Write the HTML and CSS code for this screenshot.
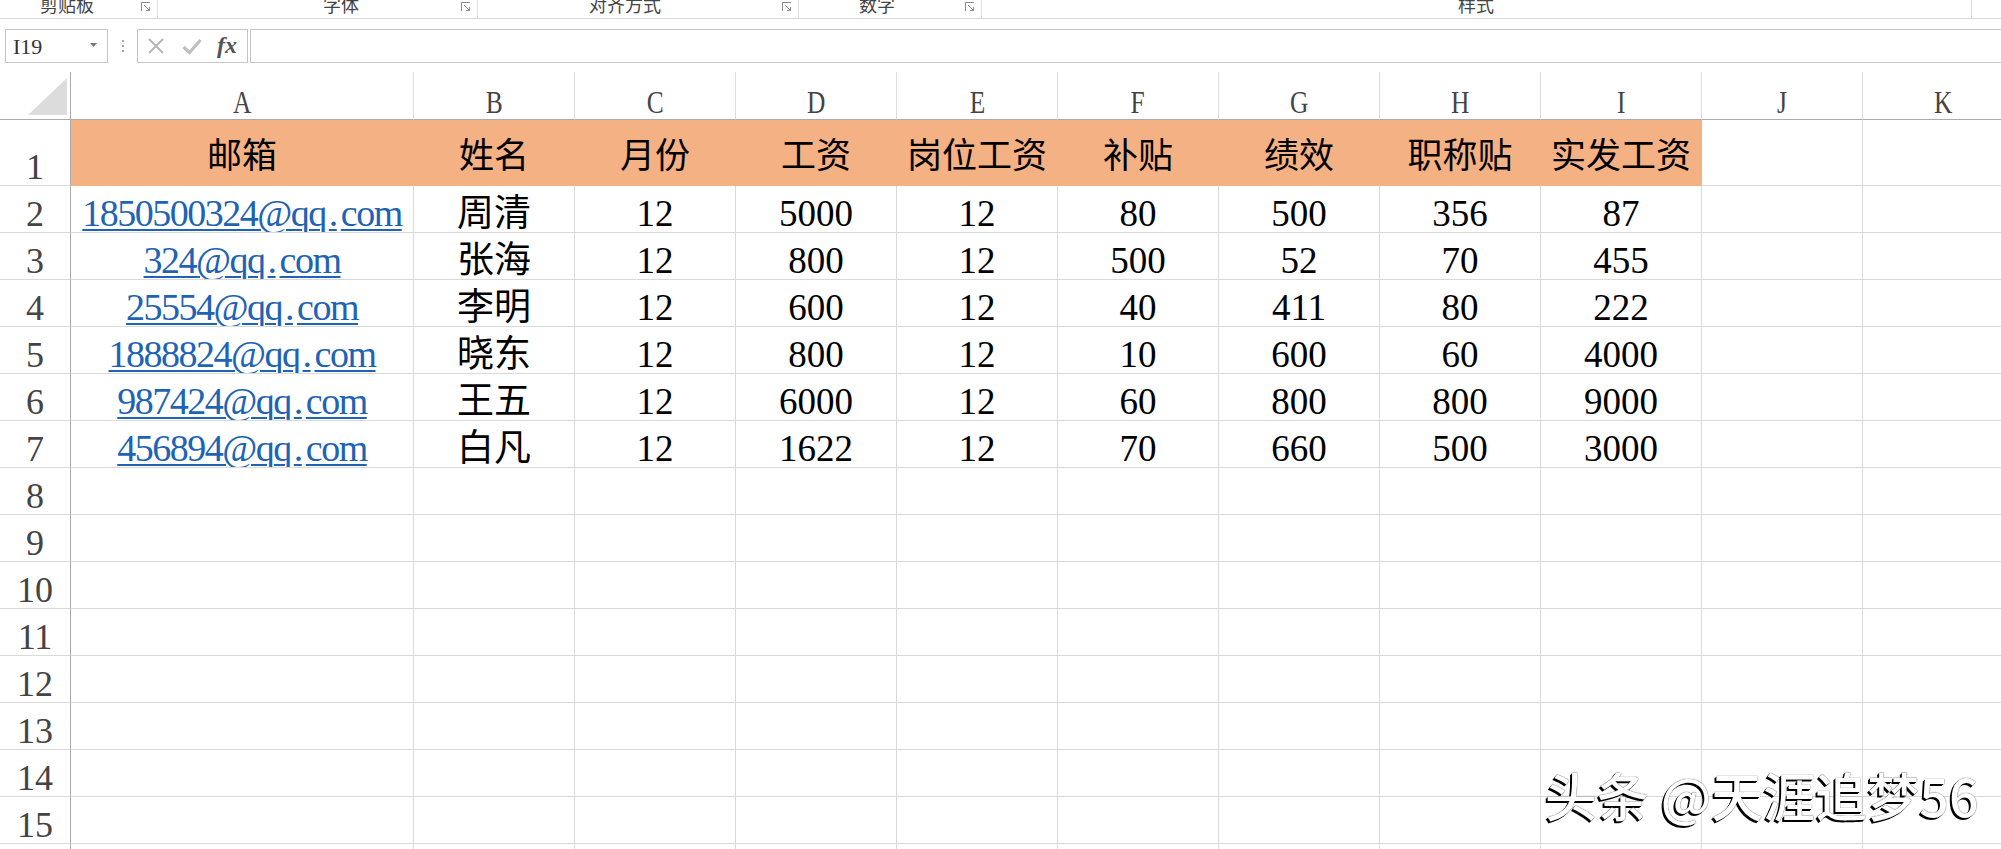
FILE: index.html
```html
<!DOCTYPE html>
<html lang="zh-CN">
<head>
<meta charset="utf-8">
<title>Excel</title>
<link rel="stylesheet" href="styles.css">
</head>
<body>
<div class="ribbon">
  <div class="grp g1"><span class="glabel">剪贴板</span><svg class="launch" width="10" height="10" viewBox="0 0 10 10"><path d="M0.5 9V0.5H9" fill="none" stroke="#8a8a8a"/><path d="M3 3L8.5 8.5M5 8.5H8.5V5" fill="none" stroke="#8a8a8a"/></svg></div>
  <div class="grp g2"><span class="glabel">字体</span><svg class="launch" width="10" height="10" viewBox="0 0 10 10"><path d="M0.5 9V0.5H9" fill="none" stroke="#8a8a8a"/><path d="M3 3L8.5 8.5M5 8.5H8.5V5" fill="none" stroke="#8a8a8a"/></svg></div>
  <div class="grp g3"><span class="glabel">对齐方式</span><svg class="launch" width="10" height="10" viewBox="0 0 10 10"><path d="M0.5 9V0.5H9" fill="none" stroke="#8a8a8a"/><path d="M3 3L8.5 8.5M5 8.5H8.5V5" fill="none" stroke="#8a8a8a"/></svg></div>
  <div class="grp g4"><span class="glabel">数字</span><svg class="launch" width="10" height="10" viewBox="0 0 10 10"><path d="M0.5 9V0.5H9" fill="none" stroke="#8a8a8a"/><path d="M3 3L8.5 8.5M5 8.5H8.5V5" fill="none" stroke="#8a8a8a"/></svg></div>
  <div class="grp g5"><span class="glabel">样式</span></div>
</div>

<div class="fbar">
  <div class="namebox"><span>I19</span><svg class="dd" width="7" height="4" viewBox="0 0 7 4"><path d="M0 0H7L3.5 4Z" fill="#777"/></svg></div>
  <div class="dots"><i></i><i></i><i></i></div>
  <div class="fxbox">
    <svg class="ico" width="18" height="18" viewBox="0 0 18 18"><path d="M2 2L16 16M16 2L2 16" stroke="#b7b7b7" stroke-width="2" fill="none"/></svg>
    <svg class="ico" width="20" height="18" viewBox="0 0 20 18"><path d="M1.5 10L7.5 15.5L18.5 3" stroke="#c0c0c0" stroke-width="3.2" fill="none"/></svg>
    <span class="fx">fx</span>
  </div>
  <div class="finput"></div>
</div>

<div class="sheet">
  <div class="corner"><svg width="70" height="47" viewBox="0 0 70 47"><path d="M67 6V43H28Z" fill="#dcdcdc"/></svg></div>
  <div class="ch"><span>A</span></div><div class="ch"><span>B</span></div><div class="ch"><span>C</span></div><div class="ch"><span>D</span></div><div class="ch"><span>E</span></div><div class="ch"><span>F</span></div><div class="ch"><span>G</span></div><div class="ch"><span>H</span></div><div class="ch"><span>I</span></div><div class="ch"><span>J</span></div><div class="ch"><span>K</span></div>

  <div class="rh">1</div>
  <div class="c hd">邮箱</div><div class="c hd">姓名</div><div class="c hd">月份</div><div class="c hd">工资</div><div class="c hd">岗位工资</div><div class="c hd">补贴</div><div class="c hd">绩效</div><div class="c hd">职称贴</div><div class="c hd">实发工资</div><div class="c"></div><div class="c"></div>

  <div class="rh">2</div>
  <div class="c"><span class="mail">1850500324@qq<span class="dot">.</span>com</span></div><div class="c">周清</div><div class="c">12</div><div class="c">5000</div><div class="c">12</div><div class="c">80</div><div class="c">500</div><div class="c">356</div><div class="c">87</div><div class="c"></div><div class="c"></div>

  <div class="rh">3</div>
  <div class="c"><span class="mail">324@qq<span class="dot">.</span>com</span></div><div class="c">张海</div><div class="c">12</div><div class="c">800</div><div class="c">12</div><div class="c">500</div><div class="c">52</div><div class="c">70</div><div class="c">455</div><div class="c"></div><div class="c"></div>

  <div class="rh">4</div>
  <div class="c"><span class="mail">25554@qq<span class="dot">.</span>com</span></div><div class="c">李明</div><div class="c">12</div><div class="c">600</div><div class="c">12</div><div class="c">40</div><div class="c">411</div><div class="c">80</div><div class="c">222</div><div class="c"></div><div class="c"></div>

  <div class="rh">5</div>
  <div class="c"><span class="mail">1888824@qq<span class="dot">.</span>com</span></div><div class="c">晓东</div><div class="c">12</div><div class="c">800</div><div class="c">12</div><div class="c">10</div><div class="c">600</div><div class="c">60</div><div class="c">4000</div><div class="c"></div><div class="c"></div>

  <div class="rh">6</div>
  <div class="c"><span class="mail">987424@qq<span class="dot">.</span>com</span></div><div class="c">王五</div><div class="c">12</div><div class="c">6000</div><div class="c">12</div><div class="c">60</div><div class="c">800</div><div class="c">800</div><div class="c">9000</div><div class="c"></div><div class="c"></div>

  <div class="rh">7</div>
  <div class="c"><span class="mail">456894@qq<span class="dot">.</span>com</span></div><div class="c">白凡</div><div class="c">12</div><div class="c">1622</div><div class="c">12</div><div class="c">70</div><div class="c">660</div><div class="c">500</div><div class="c">3000</div><div class="c"></div><div class="c"></div>

  <div class="rh">8</div>
  <div class="c"></div><div class="c"></div><div class="c"></div><div class="c"></div><div class="c"></div><div class="c"></div><div class="c"></div><div class="c"></div><div class="c"></div><div class="c"></div><div class="c"></div>
  <div class="rh">9</div>
  <div class="c"></div><div class="c"></div><div class="c"></div><div class="c"></div><div class="c"></div><div class="c"></div><div class="c"></div><div class="c"></div><div class="c"></div><div class="c"></div><div class="c"></div>
  <div class="rh">10</div>
  <div class="c"></div><div class="c"></div><div class="c"></div><div class="c"></div><div class="c"></div><div class="c"></div><div class="c"></div><div class="c"></div><div class="c"></div><div class="c"></div><div class="c"></div>
  <div class="rh">11</div>
  <div class="c"></div><div class="c"></div><div class="c"></div><div class="c"></div><div class="c"></div><div class="c"></div><div class="c"></div><div class="c"></div><div class="c"></div><div class="c"></div><div class="c"></div>
  <div class="rh">12</div>
  <div class="c"></div><div class="c"></div><div class="c"></div><div class="c"></div><div class="c"></div><div class="c"></div><div class="c"></div><div class="c"></div><div class="c"></div><div class="c"></div><div class="c"></div>
  <div class="rh">13</div>
  <div class="c"></div><div class="c"></div><div class="c"></div><div class="c"></div><div class="c"></div><div class="c"></div><div class="c"></div><div class="c"></div><div class="c"></div><div class="c"></div><div class="c"></div>
  <div class="rh">14</div>
  <div class="c"></div><div class="c"></div><div class="c"></div><div class="c"></div><div class="c"></div><div class="c"></div><div class="c"></div><div class="c"></div><div class="c"></div><div class="c"></div><div class="c"></div>
  <div class="rh">15</div>
  <div class="c"></div><div class="c"></div><div class="c"></div><div class="c"></div><div class="c"></div><div class="c"></div><div class="c"></div><div class="c"></div><div class="c"></div><div class="c"></div><div class="c"></div>
  <div class="rh">16</div>
  <div class="c"></div><div class="c"></div><div class="c"></div><div class="c"></div><div class="c"></div><div class="c"></div><div class="c"></div><div class="c"></div><div class="c"></div><div class="c"></div><div class="c"></div>
</div>

<div class="watermark">头条 @天涯追梦56</div>
</body>
</html>
```

FILE: styles.css
```css
html, body {
  margin: 0;
  padding: 0;
}
body {
  width: 2001px;
  height: 849px;
  overflow: hidden;
  position: relative;
  background: #ffffff;
  font-family: "Liberation Serif", "Noto Sans CJK SC", serif;
  color: #000;
}

/* ribbon group labels strip */
.ribbon {
  display: flex;
  height: 18px;
  border-bottom: 1px solid #d6d6d6;
  overflow: hidden;
  font-family: "Noto Sans CJK SC", sans-serif;
  font-size: 18px;
  line-height: 18px;
  color: #444;
}
.grp {
  display: flex;
  align-items: flex-start;
  box-sizing: border-box;
  border-right: 1px solid #dedede;
  height: 18px;
}
.g1 { width: 158px; }
.g2 { width: 320px; }
.g3 { width: 321px; }
.g4 { width: 183px; }
.g5 { width: 990px; }
.glabel {
  margin-top: -5px;
  white-space: nowrap;
}
.g1 .glabel { margin-left: 40px; }
.g2 .glabel { margin-left: 165px; }
.g3 .glabel { margin-left: 111px; }
.g4 .glabel { margin-left: 60px; }
.g5 .glabel { margin-left: 476px; }
.launch {
  margin-left: auto;
  margin-right: 6px;
  margin-top: 2px;
  flex: none;
}

/* formula bar */
.fbar {
  display: flex;
  height: 34px;
  margin-top: 10px;
}
.namebox {
  box-sizing: border-box;
  margin-left: 5px;
  width: 103px;
  border: 1px solid #c6c6c6;
  display: flex;
  align-items: center;
  padding-left: 7px;
  font-family: "Liberation Serif", serif;
  font-size: 22px;
  color: #333;
}
.namebox span { margin-top: 1px; }
.dd {
  margin-left: auto;
  margin-right: 10px;
  margin-top: -2px;
}
.dots {
  width: 29px;
  display: flex;
  flex-direction: column;
  align-items: center;
  justify-content: center;
  gap: 3px;
}
.dots i {
  display: block;
  width: 2px;
  height: 2px;
  background: #a9a9a9;
}
.fxbox {
  box-sizing: border-box;
  width: 111px;
  border: 1px solid #c6c6c6;
  display: flex;
  align-items: center;
  padding-left: 9px;
}
.fxbox .ico:nth-child(2) { margin-left: 17px; }
.fx {
  margin-left: 15px;
  font-family: "Liberation Serif", serif;
  font-style: italic;
  font-weight: bold;
  font-size: 24px;
  color: #555;
  margin-top: -2px;
}
.finput {
  flex: 1;
  margin-left: 2px;
  box-sizing: border-box;
  border: 1px solid #c6c6c6;
  border-right: none;
}

/* sheet grid */
.sheet {
  margin-top: 9px;
  display: grid;
  grid-template-columns: 71px 343px repeat(10, 161px);
  grid-template-rows: 48px 66px;
  grid-auto-rows: 47px;
}
.sheet > div {
  box-sizing: border-box;
  border-right: 1px solid #d9d9d9;
  border-bottom: 1px solid #d9d9d9;
  display: flex;
  align-items: flex-end;
  justify-content: center;
  overflow: hidden;
  white-space: nowrap;
}
.corner {
  border-right-color: #ababab !important;
  border-bottom-color: #ababab !important;
  align-items: flex-start !important;
  justify-content: flex-start !important;
}
.corner svg { display: block; }
.ch {
  color: #444;
  font-size: 31px;
  line-height: 31px;
  padding-bottom: 1px;
  border-right-color: #dcdcdc !important;
  border-bottom-color: #ababab !important;
}
.ch span {
  display: inline-block;
  transform: scaleX(0.82);
}
.rh {
  color: #444;
  font-size: 36px;
  line-height: 36px;
  border-right-color: #ababab !important;
}
.c {
  font-size: 37px;
  line-height: 37px;
}
.hd {
  background: #f4b183;
  font-size: 35px;
  line-height: 35px;
  padding-bottom: 11px;
  border-right-color: #f4b183 !important;
  border-bottom-color: #f4b183 !important;
}
.mail {
  font-size: 38px;
  letter-spacing: -1.5px;
  color: #1e63b4;
  text-decoration: underline;
  text-decoration-thickness: 2px;
  text-underline-offset: 3px;
}
.mail .dot {
  padding: 0 4px 0 3px;
}

/* overlay watermark */
.watermark {
  position: absolute;
  left: 1545px;
  top: 769px;
  font-family: "Noto Sans CJK SC", sans-serif;
  font-size: 52px;
  font-weight: 500;
  line-height: 52px;
  color: #ffffff;
  white-space: nowrap;
  text-shadow: -2px 2px 0 #000, -1px 1px 0 #000, 0 0 1px #000;
}
```
